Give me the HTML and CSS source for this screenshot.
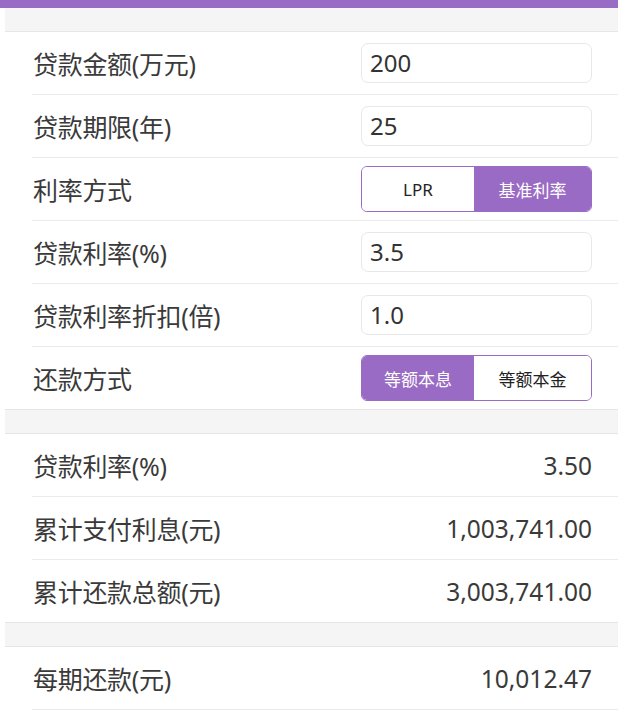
FILE: index.html
```html
<!DOCTYPE html>
<html lang="zh-CN">
<head>
<meta charset="utf-8">
<title>房贷计算器</title>
<link rel="stylesheet" href="styles.css">
</head>
<body>
<div class="topbar"></div>
<main class="page">
  <div class="band band-first"></div>
  <section class="group">
    <div class="row">
      <span class="label">贷款金额(万元)</span>
      <div class="field">200</div>
    </div>
    <div class="row">
      <span class="label">贷款期限(年)</span>
      <div class="field">25</div>
    </div>
    <div class="row">
      <span class="label">利率方式</span>
      <div class="seg">
        <span class="seg-item">LPR</span>
        <span class="seg-item active">基准利率</span>
      </div>
    </div>
    <div class="row">
      <span class="label">贷款利率(%)</span>
      <div class="field">3.5</div>
    </div>
    <div class="row">
      <span class="label">贷款利率折扣(倍)</span>
      <div class="field">1.0</div>
    </div>
    <div class="row last">
      <span class="label">还款方式</span>
      <div class="seg">
        <span class="seg-item active">等额本息</span>
        <span class="seg-item">等额本金</span>
      </div>
    </div>
  </section>
  <div class="band"></div>
  <section class="group">
    <div class="row">
      <span class="label">贷款利率(%)</span>
      <span class="value">3.50</span>
    </div>
    <div class="row">
      <span class="label">累计支付利息(元)</span>
      <span class="value">1,003,741.00</span>
    </div>
    <div class="row last">
      <span class="label">累计还款总额(元)</span>
      <span class="value">3,003,741.00</span>
    </div>
  </section>
  <div class="band"></div>
  <section class="group">
    <div class="row">
      <span class="label">每期还款(元)</span>
      <span class="value">10,012.47</span>
    </div>
  </section>
</main>
</body>
</html>
```
FILE: styles.css
```css
html, body {
  margin: 0;
  padding: 0;
  background: #ffffff;
}
body {
  font-family: "Noto Sans", "Noto Sans CJK SC", sans-serif;
  color: #333333;
}
.topbar {
  height: 8px;
  background: #9a6bc4;
}
.page {
  margin-left: 5px;
}
.band {
  height: 23px;
  background: #f5f5f5;
  border-top: 1px solid #e6e6e6;
  border-bottom: 1px solid #e6e6e6;
}
.band-first {
  border-top: none;
}
.group {
  padding-left: 27px;
}
.row {
  height: 62px;
  border-bottom: 1px solid #ebebeb;
  display: flex;
  align-items: center;
  justify-content: space-between;
  padding-right: 26px;
  padding-left: 1px;
}
.row.last {
  border-bottom: none;
}
.label {
  font-size: 25px;
  letter-spacing: -0.3px;
  color: #3a3a3a;
}
.field {
  box-sizing: border-box;
  width: 231px;
  height: 40px;
  border: 1px solid #e8e8e8;
  border-radius: 7px;
  padding-left: 8px;
  font-size: 24px;
  line-height: 38px;
  color: #333333;
}
.value {
  font-size: 24.5px;
  color: #3a3a3a;
}
.seg {
  box-sizing: border-box;
  width: 231px;
  height: 46px;
  border: 1px solid #9a6bc4;
  border-radius: 6px;
  overflow: hidden;
  display: grid;
  grid-template-columns: 112px 1fr;
}
.seg-item {
  display: flex;
  align-items: center;
  justify-content: center;
  font-size: 17px;
  color: #222222;
  background: #ffffff;
}
.seg-item.active {
  background: #9a6bc4;
  color: #ffffff;
}
```
